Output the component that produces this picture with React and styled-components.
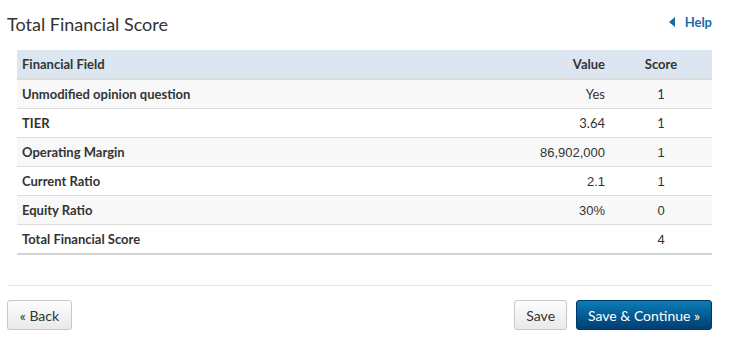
import React from "react";
import styled, { createGlobalStyle } from "styled-components";

const GlobalStyle = createGlobalStyle`
  body {
    margin: 0;
    background: #fff;
    font-family: Lato, "Liberation Sans", sans-serif;
    color: #333;
  }
`;

const Page = styled.div`
  width: 734px;
  padding: 0 22px 0 7px;
  box-sizing: border-box;
`;

const Header = styled.div`
  display: flex;
  justify-content: space-between;
  align-items: center;
  height: 48px;
  padding-bottom: 2px;
`;

const Title = styled.h2`
  margin: 0;
  font-size: 18px;
  font-weight: 400;
  color: #333;
`;

const HelpLink = styled.a`
  display: flex;
  align-items: center;
  gap: 10px;
  font-size: 13px;
  font-weight: 700;
  color: #1b6aa5;
  text-decoration: none;
  margin-top: -4px;
`;

const Arrow = styled.span`
  width: 0;
  height: 0;
  border-top: 5px solid transparent;
  border-bottom: 5px solid transparent;
  border-right: 6px solid #1b6aa5;
`;

const Table = styled.table`
  margin-left: 10px;
  width: 695px;
  border-collapse: collapse;
  font-size: 13px;
  border-bottom: 2px solid #d4d4d4;
`;

const HeadCell = styled.th`
  background: #dbe6f0;
  height: 28px;
  padding: 0 5px;
  font-weight: 700;
  text-align: ${(p) => p.align || "left"};
  border-bottom: 2px solid #dcdcdc;
  color: #333;
`;

const Row = styled.tr`
  background: ${(p) => (p.$striped ? "#f8f8f8" : "#fff")};
`;

const Cell = styled.td`
  height: 28px;
  padding: 0 5px;
  border-top: ${(p) => (p.$first ? "none" : "1px solid #dcdcdc")};
  font-weight: ${(p) => (p.$label ? 700 : 400)};
  text-align: ${(p) => p.$align || "left"};
  font-family: ${(p) =>
    p.$arial ? '"Liberation Sans", Arial, sans-serif' : 'Lato, "Liberation Sans", sans-serif'};
  color: #333;
`;

const Divider = styled.hr`
  border: none;
  border-top: 1px solid #e3e8ee;
  margin: 30px 0 14px;
`;

const Footer = styled.div`
  display: flex;
  align-items: center;
  gap: 9px;
`;

const Spacer = styled.div`
  flex: 1;
`;

const Button = styled.button`
  height: 30px;
  padding: 0 11px;
  min-width: ${(p) => (p.$wide ? "65px" : "0")};
  border-radius: 3px;
  font-family: Lato, "Liberation Sans", sans-serif;
  font-size: 14px;
  cursor: pointer;
  border: 1px solid ${(p) => (p.$primary ? "#00386a" : "#c8c8c8")};
  color: ${(p) => (p.$primary ? "#fff" : "#333")};
  background: ${(p) =>
    p.$primary
      ? "linear-gradient(#0a7db8, #003d70)"
      : "linear-gradient(#fdfdfd, #e9e9e9)"};
  box-shadow: 0 1px 1px rgba(0, 0, 0, 0.12);
`;

const rows = [
  { field: "Unmodified opinion question", value: "Yes", score: "1" },
  { field: "TIER", value: "3.64", score: "1" },
  { field: "Operating Margin", value: "86,902,000", score: "1", arial: true },
  { field: "Current Ratio", value: "2.1", score: "1", arial: true },
  { field: "Equity Ratio", value: "30%", score: "0", arial: true },
  { field: "Total Financial Score", value: "", score: "4", arial: true },
];

export default function App() {
  return (
    <>
      <GlobalStyle />
      <Page>
        <Header>
          <Title>Total Financial Score</Title>
          <HelpLink href="#">
            <Arrow />
            Help
          </HelpLink>
        </Header>
        <Table>
          <colgroup>
            <col />
            <col style={{ width: 160 }} />
            <col style={{ width: 102 }} />
          </colgroup>
          <thead>
            <tr>
              <HeadCell>Financial Field</HeadCell>
              <HeadCell align="right">Value</HeadCell>
              <HeadCell align="center">Score</HeadCell>
            </tr>
          </thead>
          <tbody>
            {rows.map((r, i) => (
              <Row key={r.field} $striped={i % 2 === 0}>
                <Cell $label $first={i === 0}>
                  {r.field}
                </Cell>
                <Cell $align="right" $arial={r.arial} $first={i === 0}>
                  {r.value}
                </Cell>
                <Cell $align="center" $arial={r.arial} $first={i === 0}>
                  {r.score}
                </Cell>
              </Row>
            ))}
          </tbody>
        </Table>
        <Divider />
        <Footer>
          <Button $wide>« Back</Button>
          <Spacer />
          <Button>Save</Button>
          <Button $primary>Save &amp; Continue »</Button>
        </Footer>
      </Page>
    </>
  );
}
